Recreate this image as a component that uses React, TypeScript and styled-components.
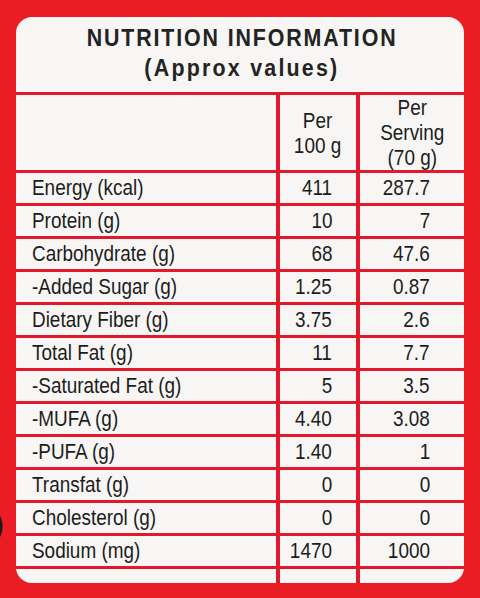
import { Fragment } from 'react';
import styled, { createGlobalStyle } from 'styled-components';

const GlobalStyle = createGlobalStyle`
  html, body {
    margin: 0;
    padding: 0;
    background: #ec1c24;
  }
  body {
    font-family: "Liberation Sans", Arial, sans-serif;
  }
`;

const Page = styled.div`
  position: relative;
  width: 480px;
  height: 598px;
  padding: 17px 0 0 16px;
  box-sizing: border-box;
  background: #ec1c24;
  overflow: hidden;
`;

const Card = styled.div`
  width: 448px;
  height: 566px;
  border-radius: 16px;
  overflow: hidden;
  background: #f7f6f4;
  display: flex;
  flex-direction: column;
`;

// the label print is a condensed grotesque, so squeeze Liberation Sans
const Narrow = styled.span<{ $origin?: 'left' | 'right' | 'center'; $scale?: number }>`
  display: inline-block;
  transform: scaleX(${(p) => p.$scale ?? 0.86});
  transform-origin: ${(p) => p.$origin ?? 'center'} center;
  white-space: nowrap;
`;

const TitleBlock = styled.div`
  height: 75px;
  display: flex;
  flex-direction: column;
  align-items: center;
  justify-content: center;
  color: #232323;
  font-weight: 700;
  font-size: 23px;
  line-height: 30px;
  padding: 0 0 4px 4px;
  box-sizing: border-box;
`;

const Title = styled(Narrow)`
  letter-spacing: 2px;
`;

const Subtitle = styled(Narrow)`
  letter-spacing: 2.4px;
`;

const Table = styled.div`
  flex: 1;
  display: grid;
  grid-template-columns: 260px 76px 1fr;
  grid-template-rows: 75px repeat(12, 30px) 1fr;
  gap: 3px 4px;
  padding-top: 3px;
  background: #e01a2a;
`;

const Cell = styled.div<{ $align?: 'left' | 'right'; $pad?: number }>`
  background: #f7f6f4;
  color: #1c1c1c;
  font-size: 22px;
  display: flex;
  align-items: center;
  justify-content: ${(p) => (p.$align === 'right' ? 'flex-end' : 'flex-start')};
  padding: ${(p) => (p.$align === 'right' ? `0 ${p.$pad ?? 0}px 0 0` : '0 0 0 16px')};
  white-space: nowrap;
`;

const HeadCell = styled.div`
  background: #f7f6f4;
  color: #1c1c1c;
  font-size: 22px;
  line-height: 25px;
  display: flex;
  align-items: center;
  justify-content: center;
  text-align: center;
`;

const HeadText = styled(Narrow)`
  display: flex;
  flex-direction: column;
  align-items: center;
`;

const Stray = styled.span`
  position: absolute;
  left: -7px;
  top: 504px;
  font-size: 34px;
  color: #1b1b1b;
`;

const rows: [string, string, string][] = [
  ['Energy (kcal)', '411', '287.7'],
  ['Protein (g)', '10', '7'],
  ['Carbohydrate (g)', '68', '47.6'],
  ['-Added Sugar (g)', '1.25', '0.87'],
  ['Dietary Fiber (g)', '3.75', '2.6'],
  ['Total Fat (g)', '11', '7.7'],
  ['-Saturated Fat (g)', '5', '3.5'],
  ['-MUFA (g)', '4.40', '3.08'],
  ['-PUFA (g)', '1.40', '1'],
  ['Transfat (g)', '0', '0'],
  ['Cholesterol (g)', '0', '0'],
  ['Sodium (mg)', '1470', '1000'],
];

export default function App() {
  return (
    <Page>
      <GlobalStyle />
      <Stray>)</Stray>
      <Card>
        <TitleBlock>
          <Title $scale={0.93}>NUTRITION INFORMATION</Title>
          <Subtitle $scale={0.93}>(Approx values)</Subtitle>
        </TitleBlock>
        <Table>
          <HeadCell />
          <HeadCell>
            <HeadText>
              <span>Per</span>
              <span>100 g</span>
            </HeadText>
          </HeadCell>
          <HeadCell>
            <HeadText>
              <span>Per</span>
              <span>Serving</span>
              <span>(70 g)</span>
            </HeadText>
          </HeadCell>
          {rows.map(([label, per100, perServing]) => (
            <Fragment key={label}>
              <Cell $align="left">
                <Narrow $origin="left">{label}</Narrow>
              </Cell>
              <Cell $align="right" $pad={24}>
                <Narrow $origin="right">{per100}</Narrow>
              </Cell>
              <Cell $align="right" $pad={34}>
                <Narrow $origin="right">{perServing}</Narrow>
              </Cell>
            </Fragment>
          ))}
          <Cell />
          <Cell />
          <Cell />
        </Table>
      </Card>
    </Page>
  );
}
